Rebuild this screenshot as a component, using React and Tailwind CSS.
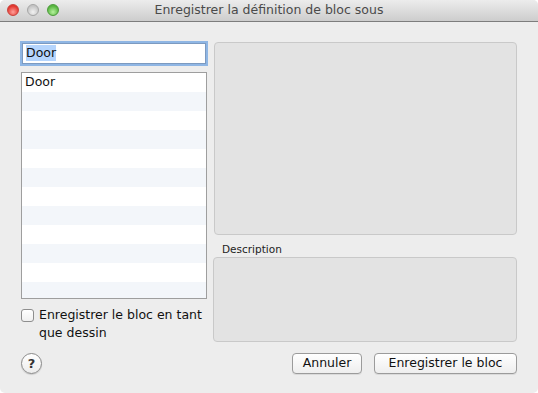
const FONT = "font-['DejaVu_Sans',Verdana,sans-serif]";

function TrafficLight({ color }) {
  return (
    <span
      className={`block h-[12px] w-[12px] rounded-full border ${color}`}
    />
  );
}

function Button({ children, className = "" }) {
  return (
    <button
      className={`h-[21px] rounded-[4px] border border-[#9b9b9b] bg-gradient-to-b from-white to-[#eeeeee] text-[12.5px] leading-none text-[#111] shadow-[0_1px_0_rgba(0,0,0,0.08)] ${className}`}
    >
      {children}
    </button>
  );
}

export default function App() {
  const rows = Array.from({ length: 12 }, (_, i) => i);

  return (
    <div className={`h-[393px] w-[538px] overflow-hidden bg-white ${FONT}`}>
      <div className="flex h-full w-full flex-col overflow-hidden rounded-[5px] bg-[#ededed]">
        {/* Title bar */}
        <div className="relative flex h-[22px] shrink-0 items-center justify-center border-b border-[#7d7d7d] bg-gradient-to-b from-[#ececec] to-[#cdcdcd]">
          <div className="absolute left-[7px] top-[4px] flex gap-[8px]">
            <TrafficLight color="border-[#c8413b] bg-[radial-gradient(circle_at_50%_70%,#ffa09a,#e2352d_70%)]" />
            <TrafficLight color="border-[#a5a5a5] bg-[radial-gradient(circle_at_50%_70%,#f2f2f2,#c4c4c4_70%)]" />
            <TrafficLight color="border-[#4b9a3a] bg-[radial-gradient(circle_at_50%_70%,#b6f29e,#56b43e_70%)]" />
          </div>
          <span className="text-[12.5px] text-[#4a4a4a]">
            Enregistrer la définition de bloc sous
          </span>
        </div>

        {/* Body */}
        <div className="flex flex-col px-[21px] pt-[20px]">
          <div className="flex h-[300px] gap-[7px]">
            {/* Left column */}
            <div className="flex w-[186px] shrink-0 flex-col">
              <div className="ml-[1px] mt-[1px] flex h-[21px] w-[184px] items-center border border-[#7c9ac0] bg-white pl-[3px] shadow-[0_0_0_2px_#8fb6e4] text-[12.5px] text-[#111]">
                <span className="bg-[#b5d5fd] leading-[16px]">Door</span>
              </div>
              <div className="mt-[8px] flex h-[230px] flex-col overflow-hidden border border-[#9e9e9e] bg-white">
                {rows.map((i) => (
                  <div
                    key={i}
                    className={`flex h-[19px] shrink-0 items-center pl-[3px] text-[12.5px] text-[#111] ${
                      i % 2 === 1 ? "bg-[#f3f6fa]" : "bg-white"
                    }`}
                  >
                    {i === 0 ? "Door" : ""}
                  </div>
                ))}
              </div>
              <label className="mt-[9px] flex gap-[5px]">
                <span className="mt-[1px] block h-[13px] w-[13px] shrink-0 rounded-[3px] border border-[#8e8e8e] bg-gradient-to-b from-white to-[#f0f0f0]" />
                <span className="-mt-[2px] text-[12.5px] leading-[18px] text-[#111]">
                  Enregistrer le bloc en tant que dessin
                </span>
              </label>
            </div>

            {/* Right column */}
            <div className="flex flex-1 flex-col">
              <div className="h-[193px] rounded-[4px] border border-[#c9c9c9] bg-[#e3e3e3]" />
              <div className="ml-[8px] mt-[7px] h-[14px] text-[10.5px] leading-[14px] text-[#222]">
                Description
              </div>
              <div className="-ml-[1px] mt-[1px] h-[85px] rounded-[4px] border border-[#c9c9c9] bg-[#e3e3e3]" />
            </div>
          </div>

          {/* Bottom row */}
          <div className="mt-[11px] flex items-center">
            <div className="flex h-[21px] w-[21px] items-center justify-center rounded-full border border-[#8a8a8a] bg-gradient-to-b from-white to-[#ececec] text-[13px] font-bold text-[#333] shadow-[0_1px_1px_rgba(0,0,0,0.15)]">
              ?
            </div>
            <div className="ml-auto flex gap-[12px]">
              <Button className="w-[70px]">Annuler</Button>
              <Button className="w-[143px]">Enregistrer le bloc</Button>
            </div>
          </div>
        </div>
      </div>
    </div>
  );
}
